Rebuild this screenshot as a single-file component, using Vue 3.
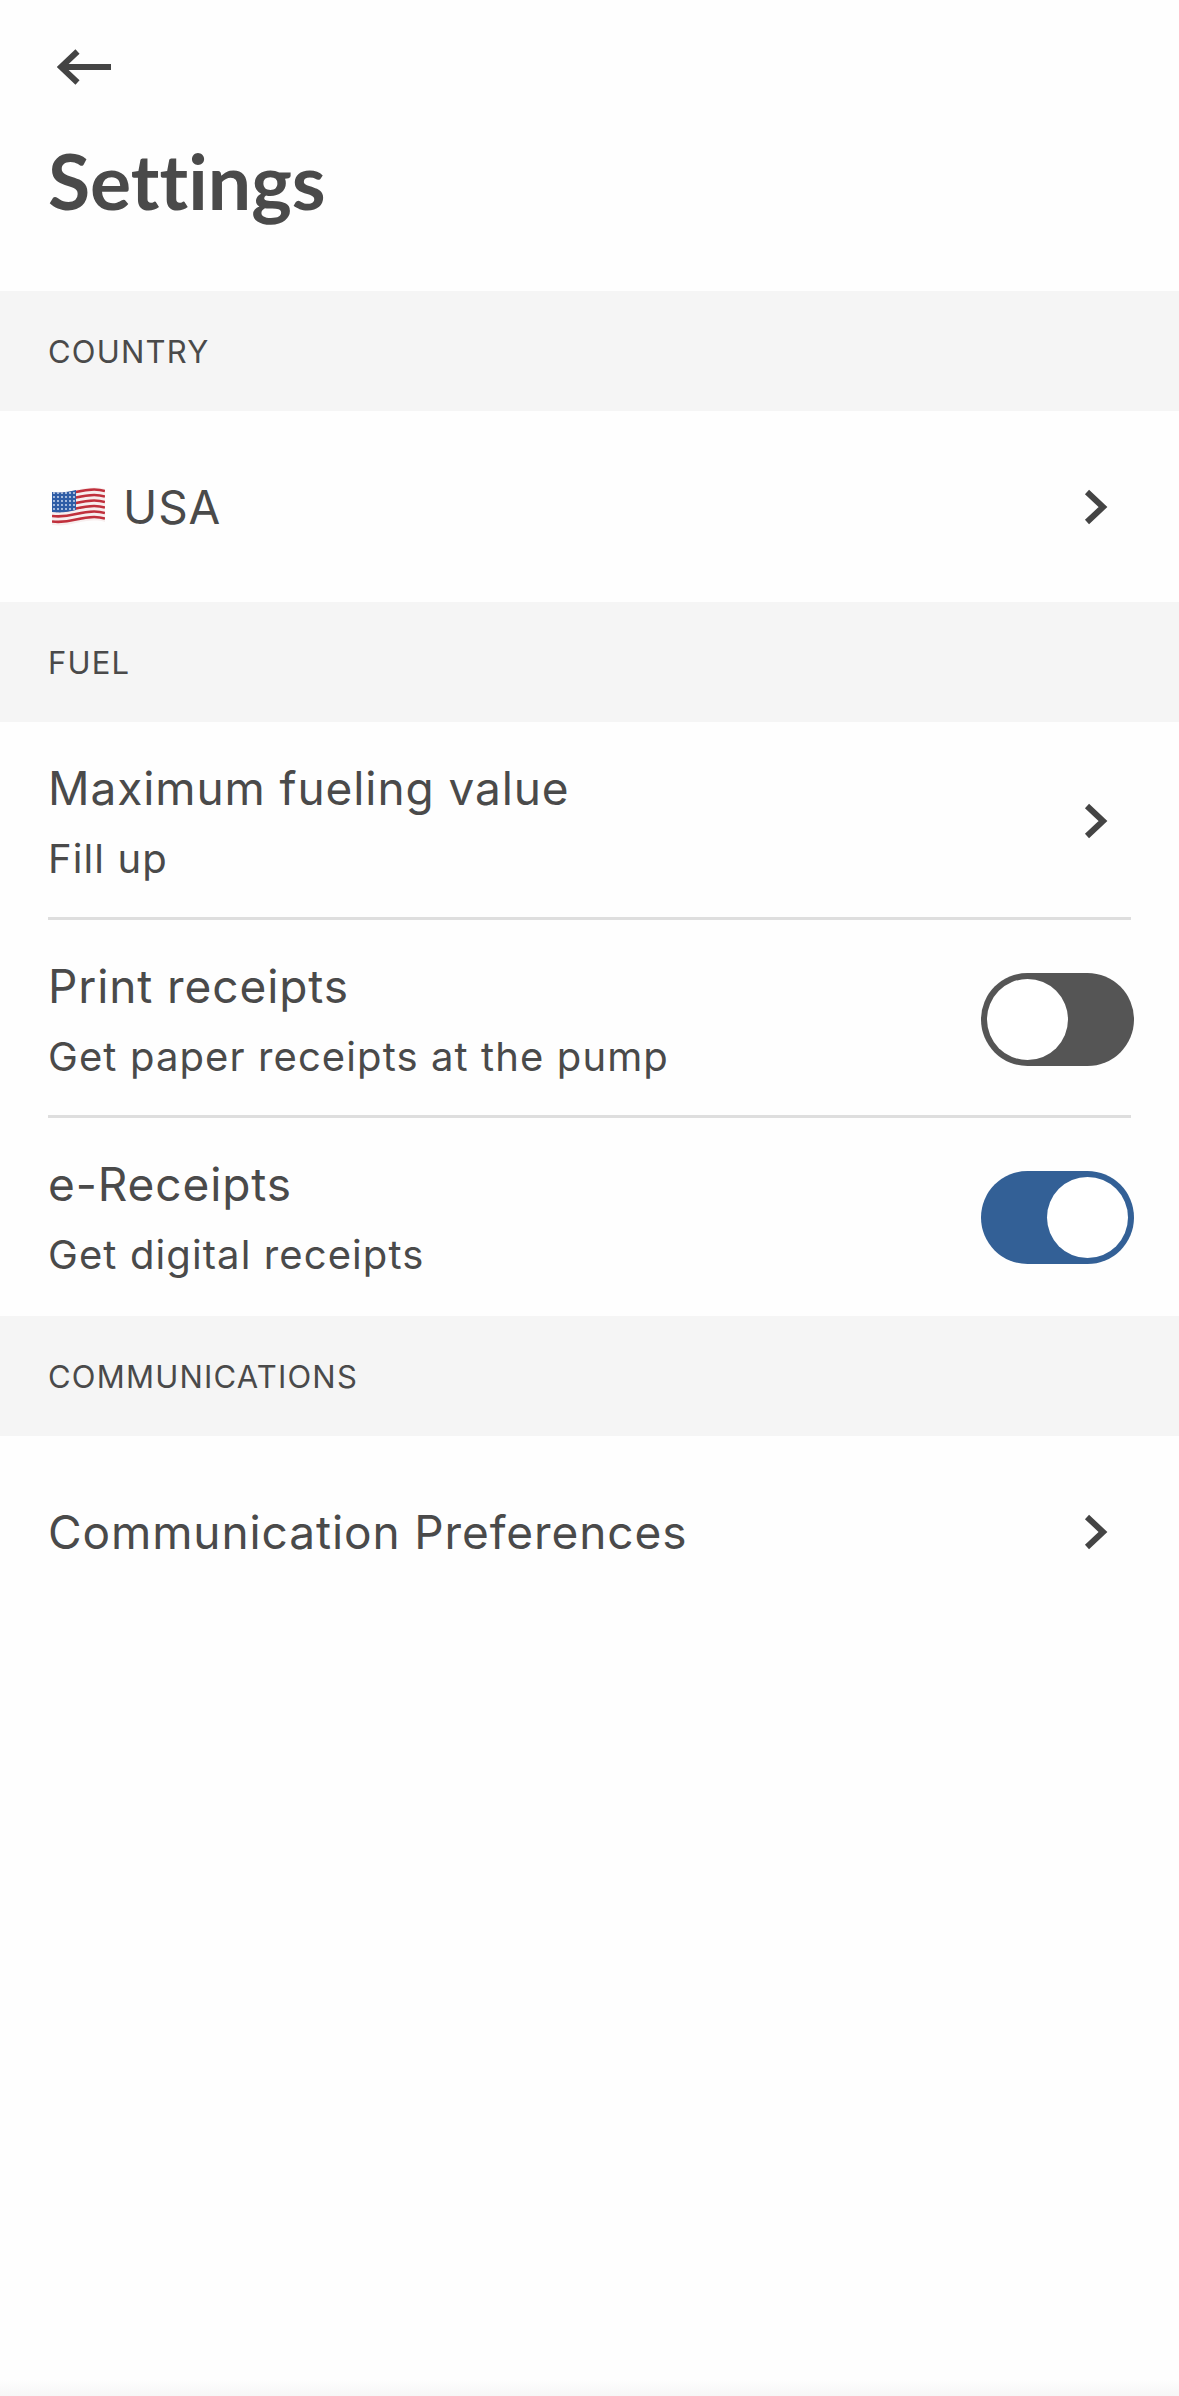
<template>
  <div class="settings">
    <header class="settings__header">
      <svg class="settings__back" width="54" height="36" viewBox="0 0 54 36">
        <path d="M54 18H4M20.500 2.500 4 18l16.500 15.500" fill="none" stroke="#444" stroke-width="6" />
      </svg>
      <h1 class="settings__title">Settings</h1>
    </header>

    <template v-for="section in sections" :key="section.title">
      <h2 class="section-head">{{ section.title }}</h2>
      <div
        v-for="row in section.rows"
        :key="row.label"
        class="row"
        :class="{ 'row--single': !row.sub, 'row--divided': row.divider }"
      >
        <div class="row__text">
          <div class="row__label">
            <svg v-if="row.flag" class="row__flag" width="53" height="40" viewBox="0 0 53 40">
              <defs>
                <pattern id="stars" width="4" height="4" patternUnits="userSpaceOnUse">
                  <circle cx="2" cy="2" r="0.900" fill="#dfe8f6" />
                </pattern>
              </defs>
              <path d="M0 5c9 1 16 0 24-2s20-4 29-1v33c-9-3-20-1-29 1S9 39 0 38z" fill="#f7eeee" />
              <path
                v-for="y in stripes"
                :key="y"
                :d="`M0 ${y}c9 1 16 0 24-2s20-4 29-1`"
                fill="none"
                stroke="#c0303c"
                stroke-width="2.600"
              />
              <path d="M0 5c9 1 16 0 24-2v20c-8 2-15 3-24 2z" fill="#2f5da6" />
              <path d="M0 5c9 1 16 0 24-2v20c-8 2-15 3-24 2z" fill="url(#stars)" />
            </svg>
            {{ row.label }}
          </div>
          <div v-if="row.sub" class="row__sub">{{ row.sub }}</div>
        </div>
        <div v-if="row.toggle" class="toggle" :class="`toggle--${row.toggle}`">
          <span class="toggle__knob"></span>
        </div>
        <svg v-else class="row__chevron" width="24" height="36" viewBox="0 0 24 36">
          <path d="M3 3l16 15L3 33" fill="none" stroke="#444" stroke-width="6" />
        </svg>
      </div>
    </template>

    <div class="settings__fade"></div>
  </div>
</template>

<script setup>
const stripes = [7, 12.500, 18, 23.500, 29, 34.500]

const sections = [
  {
    title: 'COUNTRY',
    rows: [{ label: 'USA', flag: true }],
  },
  {
    title: 'FUEL',
    rows: [
      { label: 'Maximum fueling value', sub: 'Fill up', divider: true },
      { label: 'Print receipts', sub: 'Get paper receipts at the pump', toggle: 'off', divider: true },
      { label: 'e-Receipts', sub: 'Get digital receipts', toggle: 'on' },
    ],
  },
  {
    title: 'COMMUNICATIONS',
    rows: [{ label: 'Communication Preferences' }],
  },
]
</script>

<style scoped>
.settings {
  display: flex;
  flex-direction: column;
  width: 1179px;
  height: 2396px;
  overflow: hidden;
  background: #fefefe;
  color: #4a4a4a;
  font-family: Inter, "Liberation Sans", sans-serif;
}
.settings__header {
  height: 291px;
  padding: 49px 48px 0;
  box-sizing: border-box;
}
.settings__back {
  display: block;
  margin-left: 9px;
}
.settings__title {
  margin: 50px 0 0;
  font-family: Lato, sans-serif;
  font-size: 77px;
  font-weight: 700;
  font-variant-ligatures: none;
  line-height: 90px;
}
.section-head {
  margin: 0;
  height: 120px;
  padding-left: 48px;
  display: flex;
  align-items: center;
  background: #f5f5f5;
  font-size: 31px;
  font-weight: 400;
  letter-spacing: 1.200px;
}
.row {
  position: relative;
  display: flex;
  align-items: center;
  justify-content: space-between;
  height: 198px;
  padding: 0 45px 0 48px;
}
.row--single {
  height: 191px;
}
.row--divided::after {
  content: '';
  position: absolute;
  left: 48px;
  right: 48px;
  bottom: 0;
  height: 3px;
  background: #dedede;
}
.row__label {
  display: flex;
  align-items: center;
  gap: 18px;
  font-size: 46px;
  letter-spacing: 0.900px;
  line-height: 54px;
}
.row__sub {
  margin-top: 21px;
  font-size: 40px;
  letter-spacing: 1.100px;
  line-height: 46px;
}
.row__flag {
  margin-left: 4px;
}
.row__chevron {
  margin-right: 26px;
}
.toggle {
  display: flex;
  box-sizing: border-box;
  width: 153px;
  height: 93px;
  padding: 6px;
  border-radius: 47px;
  background: #555;
}
.toggle--on {
  justify-content: flex-end;
  background: #336096;
}
.toggle__knob {
  width: 81px;
  height: 81px;
  border-radius: 50%;
  background: #fff;
}
.settings__fade {
  height: 16px;
  margin-top: auto;
  background: linear-gradient(#fefefe, #f6f6f6);
}
</style>

<style>
html, body {
  background: #fefefe;
}
</style>
